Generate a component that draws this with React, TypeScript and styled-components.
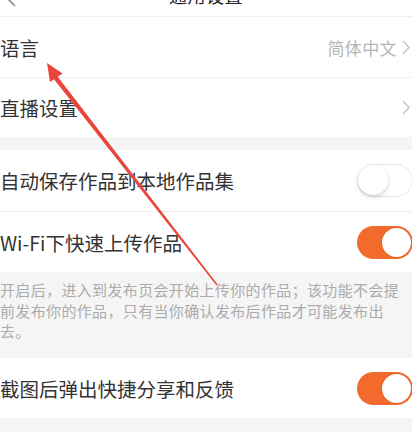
import { FC } from "react";
import styled, { createGlobalStyle } from "styled-components";

const GlobalStyle = createGlobalStyle`
  html, body {
    margin: 0;
    padding: 0;
    background: #f5f5f5;
  }
  body {
    font-family: "Noto Sans CJK SC", "Noto Sans", sans-serif;
  }
`;

const Page = styled.div`
  position: relative;
  width: 412px;
  height: 432px;
  overflow: hidden;
  background: #f5f5f5;
`;

const NavBar = styled.div`
  position: relative;
  height: 16px;
  background: #fff;
  border-bottom: 1px solid #efefef;
  overflow: hidden;
  display: flex;
  justify-content: center;
`;

const NavTitle = styled.div`
  margin-top: -15px;
  font-size: 18px;
  line-height: 20px;
  color: #222;
  letter-spacing: 0.5px;
`;

const NavBack = styled.svg`
  position: absolute;
  left: 4px;
  top: -11px;
`;

const Group = styled.div`
  background: #fff;
`;

const Row = styled.div<{ $first?: boolean; $height?: number }>`
  height: ${(p) => p.$height ?? 60}px;
  box-sizing: border-box;
  display: flex;
  align-items: center;
  justify-content: space-between;
  border-top: ${(p) => (p.$first ? "none" : "1px solid #efefef")};
  padding-right: 2px;
`;

const RowTitle = styled.span`
  font-size: 19.5px;
  color: #333;
  white-space: nowrap;
`;

const RowRight = styled.div`
  display: flex;
  align-items: center;
  gap: 5px;
`;

const RowValue = styled.span`
  font-size: 17px;
  letter-spacing: 0.4px;
  color: #b5b5b5;
`;

const Gap = styled.div<{ $size: number }>`
  height: ${(p) => p.$size}px;
`;

const Description = styled.div`
  height: 86px;
  box-sizing: border-box;
  padding: 8px 6px 0 0;
  font-size: 15px;
  letter-spacing: 0.35px;
  line-height: 20.5px;
  color: #ababab;
`;

const ToggleTrack = styled.div<{ $on: boolean }>`
  position: relative;
  width: 56px;
  height: 33px;
  box-sizing: border-box;
  border-radius: 17px;
  margin-right: -3px;
  background: ${(p) => (p.$on ? "#f36a2d" : "#fff")};
  border: ${(p) => (p.$on ? "none" : "1.5px solid #e6e6e6")};
`;

const ToggleKnob = styled.div<{ $on: boolean }>`
  position: absolute;
  top: ${(p) => (p.$on ? "2px" : "0")};
  ${(p) => (p.$on ? "right: 2px;" : "left: 0;")}
  width: ${(p) => (p.$on ? "29px" : "30px")};
  height: ${(p) => (p.$on ? "29px" : "30px")};
  border-radius: 50%;
  background: #fff;
  box-shadow: ${(p) =>
    p.$on ? "0 0 0 1px rgba(200,80,20,0.25)" : "0 2px 4px rgba(0,0,0,0.18)"};
`;

const Overlay = styled.svg`
  position: absolute;
  left: 0;
  top: 0;
  pointer-events: none;
`;

const Chevron: FC = () => (
  <svg width="8" height="15" viewBox="0 0 8 15">
    <path d="M1 1 L7 7.5 L1 14" fill="none" stroke="#c2c2c2" strokeWidth="1.3" />
  </svg>
);

const Toggle: FC<{ on: boolean }> = ({ on }) => (
  <ToggleTrack $on={on}>
    <ToggleKnob $on={on} />
  </ToggleTrack>
);

const App: FC = () => (
  <>
    <GlobalStyle />
    <Page>
      <NavBar>
        <NavBack width="14" height="20" viewBox="0 0 14 20">
          <path d="M11 1 L3 9 L11 17" fill="none" stroke="#888" strokeWidth="1.6" />
        </NavBack>
        <NavTitle>通用设置</NavTitle>
      </NavBar>

      <Group>
        <Row $first>
          <RowTitle>语言</RowTitle>
          <RowRight>
            <RowValue>简体中文</RowValue>
            <Chevron />
          </RowRight>
        </Row>
        <Row>
          <RowTitle>直播设置</RowTitle>
          <RowRight>
            <Chevron />
          </RowRight>
        </Row>
      </Group>

      <Gap $size={13} />

      <Group>
        <Row $first $height={61}>
          <RowTitle>自动保存作品到本地作品集</RowTitle>
          <Toggle on={false} />
        </Row>
        <Row $height={61}>
          <RowTitle>Wi-Fi下快速上传作品</RowTitle>
          <Toggle on />
        </Row>
      </Group>

      <Description>
        开启后，进入到发布页会开始上传你的作品；该功能不会提前发布你的作品，只有当你确认发布后作品才可能发布出去。
      </Description>

      <Group>
        <Row $first>
          <RowTitle>截图后弹出快捷分享和反馈</RowTitle>
          <Toggle on />
        </Row>
      </Group>

      <Overlay width="412" height="432" viewBox="0 0 412 432">
        <polygon points="56,74.6 52.6,77.4 216.5,285.5 217.7,284.6" fill="#e8463a" />
        <polygon points="47,63 50,82 62.5,73.5" fill="#e8463a" />
      </Overlay>
    </Page>
  </>
);

export default App;
